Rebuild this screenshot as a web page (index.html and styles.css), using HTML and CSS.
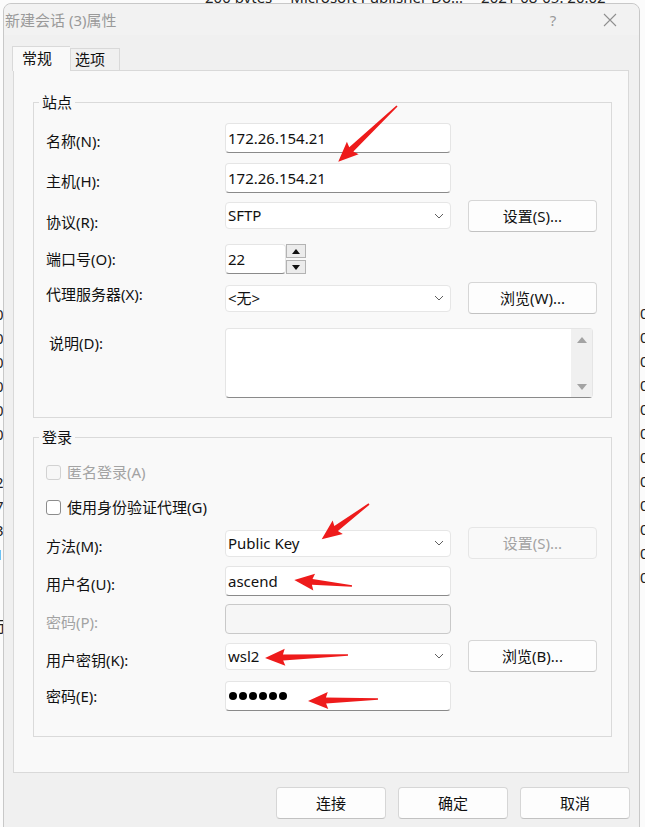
FILE: index.html
```html
<!DOCTYPE html>
<html lang="zh-CN">
<head>
    <meta charset="UTF-8">
    <meta name="viewport" content="width=device-width, initial-scale=1.0">
    <title>新建会话 (3)属性</title>
    <link rel="stylesheet" href="styles.css">
</head>
<body>
    <!-- the file list window behind the dialog -->
    <div class="behind">
        <div class="behind-top"><span class="c1">200 bytes</span><span class="c2">Microsoft Publisher Do...</span><span class="c3">2021-08-05. 20:02</span></div>
        <div class="behind-left">
            <div>0</div><div>0</div><div>0</div><div>0</div><div>0</div><div>0</div>
            <div>:</div><div>2</div><div>7</div><div>3</div><div class="blue">1</div><div>.</div><div>&nbsp;</div><div>示</div>
        </div>
        <div class="behind-right">
            <div>0</div><div>0</div><div>0</div><div>0</div><div>0</div><div>0</div>
            <div>0</div><div>0</div><div>0</div><div>0</div><div>0</div><div>0</div>
        </div>
    </div>

    <div class="dialog">
        <div class="titlebar">
            <span class="title">新建会话 (3)属性</span>
            <span class="help">?</span>
            <span class="close">
                <svg width="14" height="14" viewBox="0 0 14 14"><path d="M1 1 L13 13 M13 1 L1 13" stroke="#8f8f8f" stroke-width="1.1" fill="none"/></svg>
            </span>
        </div>

        <div class="tabs">
            <div class="tab active">常规</div>
            <div class="tab">选项</div>
        </div>

        <div class="panel">
            <fieldset class="group site">
                <legend>站点</legend>
                <div class="row r-name">
                    <span class="lbl">名称(N):</span>
                    <div class="field">172.26.154.21</div>
                </div>
                <div class="row r-host">
                    <span class="lbl">主机(H):</span>
                    <div class="field">172.26.154.21</div>
                </div>
                <div class="row r-proto">
                    <span class="lbl">协议(R):</span>
                    <div class="field combo"><span>SFTP</span><svg class="chev" width="10" height="6" viewBox="0 0 10 6"><path d="M1 1 L5 5 L9 1" stroke="#5f5f5f" fill="none"/></svg></div>
                    <div class="btn">设置(S)...</div>
                </div>
                <div class="row r-port">
                    <span class="lbl">端口号(O):</span>
                    <div class="field port">22</div>
                    <div class="spin">
                        <div class="spin-btn"><span class="tri-up"></span></div>
                        <div class="spin-btn"><span class="tri-down"></span></div>
                    </div>
                </div>
                <div class="row r-proxy">
                    <span class="lbl">代理服务器(X):</span>
                    <div class="field combo"><span>&lt;无&gt;</span><svg class="chev" width="10" height="6" viewBox="0 0 10 6"><path d="M1 1 L5 5 L9 1" stroke="#5f5f5f" fill="none"/></svg></div>
                    <div class="btn">浏览(W)...</div>
                </div>
                <div class="row r-desc">
                    <span class="lbl desc-lbl">说明(D):</span>
                    <div class="memo">
                        <div class="vscroll"><span class="tri-up grey"></span><span class="tri-down grey"></span></div>
                    </div>
                </div>
            </fieldset>

            <fieldset class="group login">
                <legend>登录</legend>
                <div class="row check r-anon disabled">
                    <span class="box"></span><span>匿名登录(A)</span>
                </div>
                <div class="row check r-agent">
                    <span class="box"></span><span>使用身份验证代理(G)</span>
                </div>
                <div class="row r-method">
                    <span class="lbl">方法(M):</span>
                    <div class="field combo"><span>Public Key</span><svg class="chev" width="10" height="6" viewBox="0 0 10 6"><path d="M1 1 L5 5 L9 1" stroke="#5f5f5f" fill="none"/></svg></div>
                    <div class="btn off">设置(S)...</div>
                </div>
                <div class="row r-user">
                    <span class="lbl">用户名(U):</span>
                    <div class="field">ascend</div>
                </div>
                <div class="row r-passp">
                    <span class="lbl off-text">密码(P):</span>
                    <div class="field off"></div>
                </div>
                <div class="row r-key">
                    <span class="lbl">用户密钥(K):</span>
                    <div class="field combo"><span>wsl2</span><svg class="chev" width="10" height="6" viewBox="0 0 10 6"><path d="M1 1 L5 5 L9 1" stroke="#5f5f5f" fill="none"/></svg></div>
                    <div class="btn">浏览(B)...</div>
                </div>
                <div class="row r-passe">
                    <span class="lbl">密码(E):</span>
                    <div class="field dots"><i></i><i></i><i></i><i></i><i></i><i></i></div>
                </div>
            </fieldset>
        </div>

        <div class="footer">
            <div class="btn wide">连接</div>
            <div class="btn wide">确定</div>
            <div class="btn wide">取消</div>
        </div>
    </div>

    <!-- red annotation arrows drawn over the screenshot -->
    <svg class="marks" width="645" height="827" viewBox="0 0 645 827">
        <g fill="#ee1b1b">
            <polygon transform="translate(397,106) rotate(136.5)" points="0,-0.8 63,-3 61,-8.5 81,0 61,8.5 63,3 0,0.8"/>
            <polygon transform="translate(369,504) rotate(143.3)" points="0,-0.8 41,-3 39,-8.5 59,0 39,8.5 41,3 0,0.8"/>
            <polygon transform="translate(352,586) rotate(185.9)" points="0,-0.8 40,-3 38,-8.5 58,0 38,8.5 40,3 0,0.8"/>
            <polygon transform="translate(348,655) rotate(177.9)" points="0,-0.8 65,-3 63,-8.5 83,0 63,8.5 65,3 0,0.8"/>
            <polygon transform="translate(378,699) rotate(178.4)" points="0,-0.8 52,-3 50,-8.5 70,0 50,8.5 52,3 0,0.8"/>
        </g>
    </svg>
</body>
</html>
```
FILE: styles.css
```css
* { box-sizing: border-box; }
body { margin: 0; width: 645px; height: 827px; overflow: hidden; position: relative; background: #fbfbfb; font-family: "Noto Sans", "Noto Sans CJK SC", sans-serif; font-size: 15px; line-height: 20px; color: #111; }

/* window behind */
.behind { position: absolute; top: 0; left: 0; width: 645px; height: 827px; }
.behind-top { position: absolute; top: -13px; left: 205px; white-space: nowrap; color: #222; }
.behind-top .c2 { margin-left: 18px; }
.behind-top .c3 { margin-left: 18px; }
.behind-left { position: absolute; left: -5px; top: 302px; line-height: 24px; color: #222; }
.behind-left .blue { color: #2a63c8; }
.behind-right { position: absolute; left: 640px; top: 301px; line-height: 24px; color: #222; }

/* dialog */
.dialog { position: absolute; left: 3px; top: 3px; width: 637px; height: 830px; background: #f0f0f0; border: 1px solid #c8c8c8; border-radius: 8px 8px 0 0; }
.titlebar { height: 31px; display: flex; align-items: center; padding-left: 1px; background: #f2f2f2; border-radius: 8px 8px 0 0; color: #9a9a9a; }
.title { flex: 1; }
.help { width: 46px; text-align: center; }
.close { width: 46px; height: 31px; display: flex; align-items: center; justify-content: center; margin-right: 6px; margin-left: 11px; }

.tabs { display: flex; align-items: flex-end; height: 24px; margin: 11px 0 0 8px; position: relative; z-index: 1; }
.tab { height: 22px; width: 50px; padding-left: 4px; border: 1px solid #d9d9d9; border-bottom: none; background: #f0f0f0; }
.tab.active { height: 25px; width: 58px; margin-bottom: -1px; padding-left: 9px; padding-top: 1px; background: #f9f9f9; border-right: none; }

.panel { margin-left: 9px; width: 616px; height: 703px; border: 1px solid #d9d9d9; background: #f9f9f9; padding: 21px 0 0 19px; }

.group { margin: 0; padding: 0 0 19px; width: 579px; border: 1px solid #dadada; }
.group legend { margin-left: 5px; padding: 0 3px; line-height: 20px; }
.group.login { margin-top: 9px; padding-bottom: 25px; }

.row { display: flex; align-items: center; }
.lbl { width: 191px; padding-left: 12px; align-self: flex-start; white-space: nowrap; }
.desc-lbl { padding-left: 15px; }

.field { width: 226px; height: 30px; background: #fff; border: 1px solid #e5e5e5; border-bottom-color: #8a8a8a; border-radius: 4px; padding-left: 2px; line-height: 28px; white-space: nowrap; }
.field.combo { height: 27px; line-height: 25px; border-color: #e6e6e6; display: flex; justify-content: space-between; align-items: center; padding-right: 6px; }
.field.port { width: 61px; }
.field.off { background: #f6f6f6; border-color: #c9c9c9; }
.field.dots { display: flex; align-items: center; padding-left: 3px; }
.field.dots i { width: 8px; height: 8px; border-radius: 50%; background: #000; margin-right: 2px; }

.btn { width: 129px; height: 32px; margin-left: 17px; background: #fdfdfd; border: 1px solid #d6d6d6; border-bottom-color: #c2c2c2; border-radius: 4px; display: flex; align-items: center; justify-content: center; }
.btn.off { color: #a3a3a3; background: #f9f9f9; border-color: #e6e6e6; }
.btn.wide { width: 110px; margin-left: 0; }

.spin { width: 20px; height: 30px; display: flex; flex-direction: column; justify-content: space-between; }
.spin-btn { height: 14px; border: 1px solid #b3b3b3; background: #ececec; display: flex; align-items: center; justify-content: center; }
.tri-up { width: 0; height: 0; border-left: 4px solid transparent; border-right: 4px solid transparent; border-bottom: 5px solid #111; }
.tri-down { width: 0; height: 0; border-left: 4px solid transparent; border-right: 4px solid transparent; border-top: 5px solid #111; }
.tri-up.grey { border-bottom-color: #a3a3a3; border-left-width: 5px; border-right-width: 5px; border-bottom-width: 6px; }
.tri-down.grey { border-top-color: #a3a3a3; border-left-width: 5px; border-right-width: 5px; border-top-width: 6px; }

.memo { width: 368px; height: 70px; background: #fff; border: 1px solid #e5e5e5; border-bottom-color: #8a8a8a; border-radius: 4px; display: flex; justify-content: flex-end; }
.vscroll { width: 21px; background: #f0f0f0; display: flex; flex-direction: column; justify-content: space-between; align-items: center; padding: 8px 0 7px; }

.check { height: 20px; padding-left: 12px; gap: 6px; }
.check .box { width: 15px; height: 15px; border: 1px solid #8c8c8c; border-radius: 3px; background: #fff; }
.check.disabled { color: #a3a3a3; }
.check.disabled .box { border-color: #d2d2d2; background: #f7f7f7; }
.off-text { color: #a3a3a3; }

/* row positions */
.r-name { margin-top: 11px; }
.r-name .lbl { margin-top: 8px; }
.r-host { margin-top: 10px; }
.r-host .lbl { margin-top: 8px; }
.r-proto { margin-top: 6px; }
.r-proto .lbl { margin-top: 13px; }
.r-port { margin-top: 12px; }
.r-port .lbl { margin-top: 5px; }
.r-proxy { margin-top: 8px; }
.r-proxy .lbl { margin-top: 2px; }
.r-desc { margin-top: 14px; align-items: flex-start; }
.r-desc .lbl { margin-top: 5px; }
.r-anon { margin-top: 15px; }
.r-agent { margin-top: 15px; }
.r-method { margin-top: 10px; }
.r-method .lbl { margin-top: 9px; }
.r-user { margin-top: 7px; }
.r-user .lbl { margin-top: 8px; }
.r-passp { margin-top: 8px; }
.r-passp .lbl { margin-top: 8px; }
.r-key { margin-top: 6px; }
.r-key .lbl { margin-top: 10px; }
.r-passe { margin-top: 9px; }
.r-passe .lbl { margin-top: 5px; }

.footer { display: flex; justify-content: flex-end; gap: 12px; margin-top: 14px; padding-right: 9px; }

.marks { position: absolute; top: 0; left: 0; pointer-events: none; }
```
